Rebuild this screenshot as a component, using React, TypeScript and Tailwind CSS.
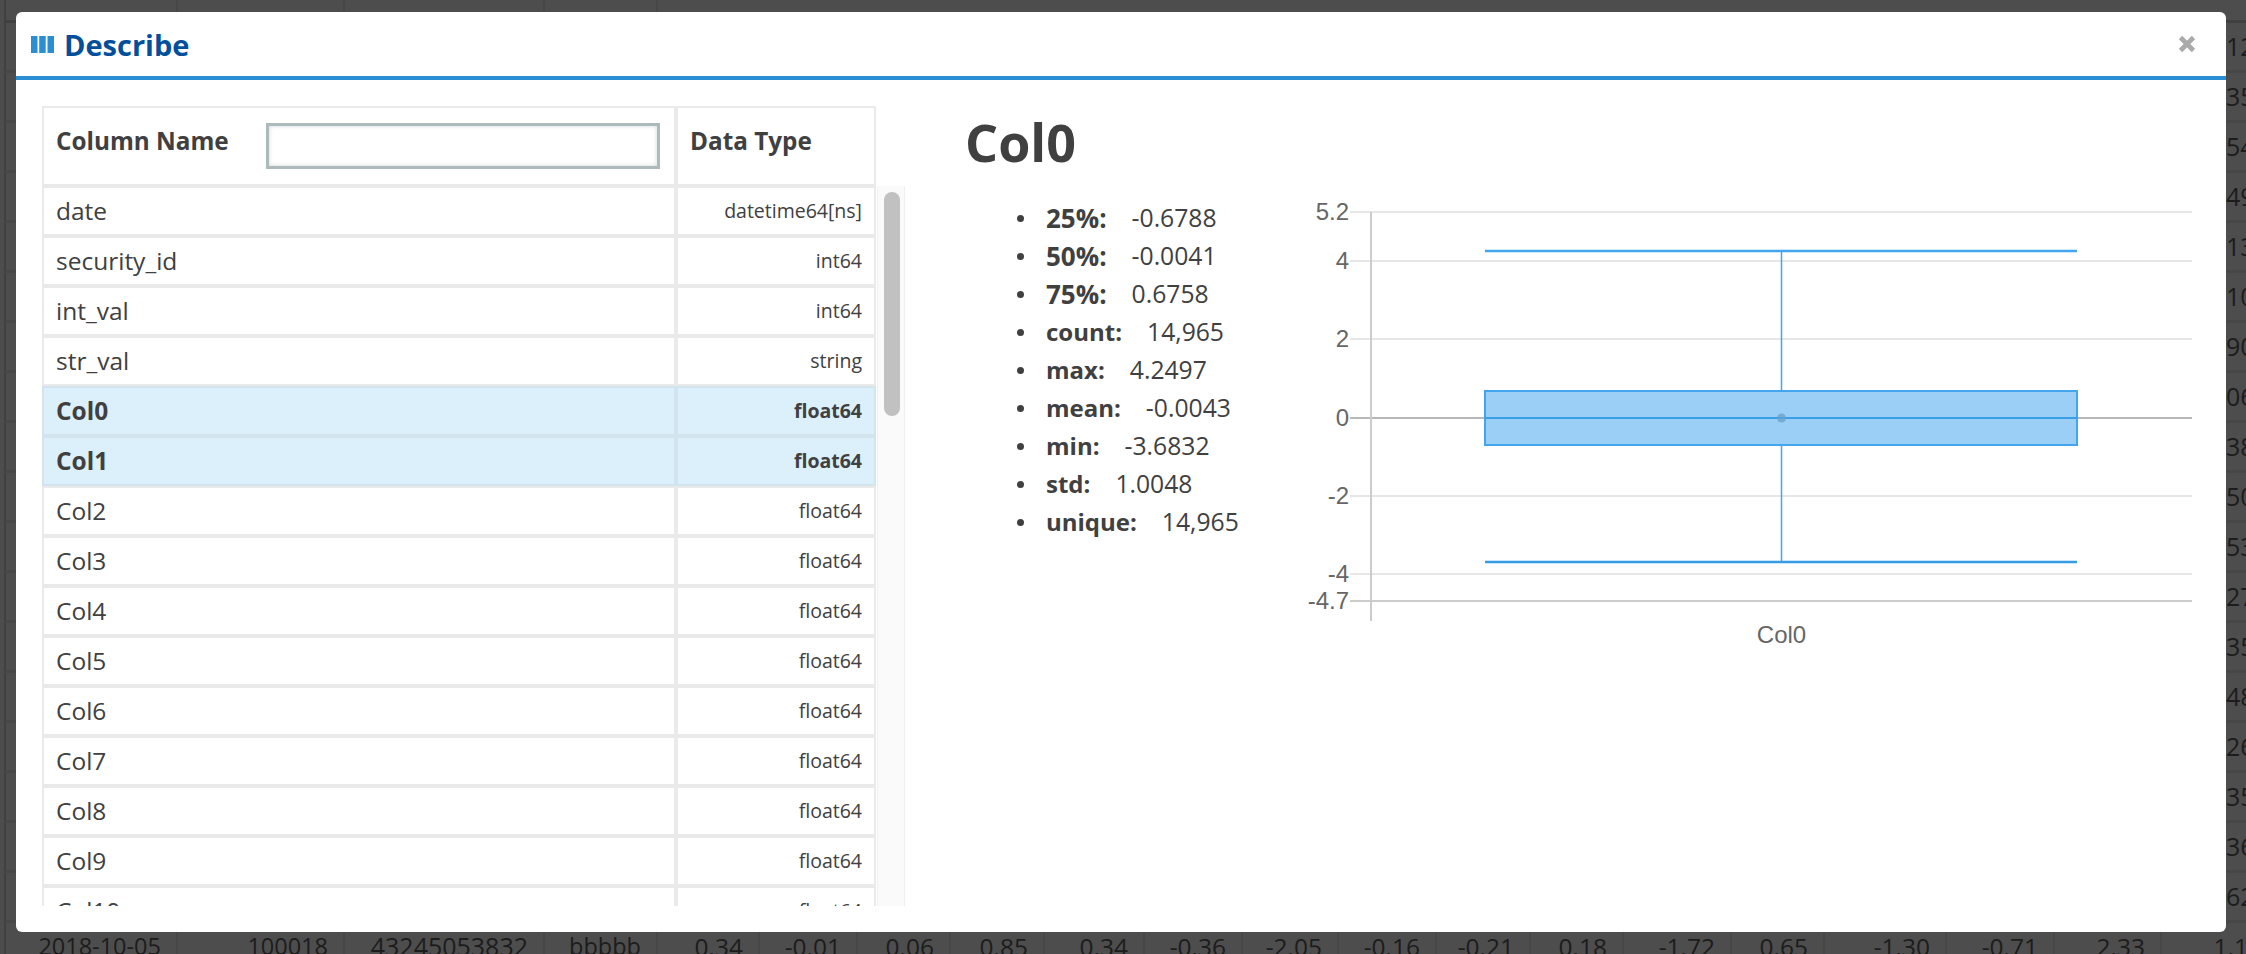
import React from "react";

const colWidths = [172, 167, 200, 113, 102, 98, 93, 94, 100, 98, 96, 98, 94, 93, 108, 93, 122, 108, 107, 117];
const bottomRow = ["2018-10-05", "100018", "43245053832", "bbbbb", "0.34", "-0.01", "0.06", "0.85", "0.34", "-0.36", "-2.05", "-0.16", "-0.21", "0.18", "-1.72", "0.65", "-1.30", "-0.71", "2.33", "1.14"];
const headerCells: [string, number][] = [["", 172], ["security_id", 167], ["int_val", 200], ["str_val", 113]];
const strip = ["12", "35", "54", "49", "13", "10", "90", "06", "38", "50", "53", "27", "35", "48", "26", "35", "36", "62"];

const columns: [string, string, boolean?][] = [
  ["date", "datetime64[ns]"],
  ["security_id", "int64"],
  ["int_val", "int64"],
  ["str_val", "string"],
  ["Col0", "float64", true],
  ["Col1", "float64", true],
  ["Col2", "float64"],
  ["Col3", "float64"],
  ["Col4", "float64"],
  ["Col5", "float64"],
  ["Col6", "float64"],
  ["Col7", "float64"],
  ["Col8", "float64"],
  ["Col9", "float64"],
  ["Col10", "float64"],
];

const stats: [string, string][] = [
  ["25%:", "-0.6788"],
  ["50%:", "-0.0041"],
  ["75%:", "0.6758"],
  ["count:", "14,965"],
  ["max:", "4.2497"],
  ["mean:", "-0.0043"],
  ["min:", "-3.6832"],
  ["std:", "1.0048"],
  ["unique:", "14,965"],
];

const ticks: [string, number, string][] = [
  ["5.2", 212, "#e6e6e6"],
  ["4", 261, "#e6e6e6"],
  ["2", 339, "#e6e6e6"],
  ["-2", 496, "#e6e6e6"],
  ["-4", 574, "#e6e6e6"],
  ["0", 418, "#b8b8b8"],
  ["-4.7", 601, "#cccccc"],
];

function Backdrop() {
  return (
    <div className="text-[23.5px] text-[#1c1c1c]">
      <div className="flex h-[73px] -mt-[50px] ml-[4px] border-l-2 border-b-[3px] border-[#404040]">
        {headerCells.map(([t, w], i) => (
          <div key={i} style={{ width: w }} className="flex items-center justify-center font-bold whitespace-nowrap border-r-2 border-[#474747]">
            {t}
          </div>
        ))}
      </div>
      {strip.map((t, i) => (
        <div key={i} className="flex items-center h-[50px] ml-[4px] border-l-2 border-[#404040] border-b-[3px] border-b-[#474747] pl-[2220px] whitespace-nowrap text-[25px]">
          {t}
        </div>
      ))}
      <div className="flex h-[50px] ml-[4px] border-l-2 border-[#404040] whitespace-nowrap">
        {bottomRow.map((t, i) => (
          <div
            key={i}
            style={{ width: colWidths[i] }}
            className={(i === 2 ? "text-[25px] " : i < 4 ? "text-[23.5px] " : "text-[24.5px] ") + "shrink-0 flex items-center justify-end pr-[15px] pb-[2px] border-r-2 border-[#474747]"}
          >
            {t}
          </div>
        ))}
      </div>
    </div>
  );
}

function Chart() {
  const blue = "#42a5ed";
  return (
    <svg width={900} height={450} viewBox="1300 200 900 450" className="shrink-0 block font-['Liberation_Sans',sans-serif]">
      {ticks.map(([t, y, c]) => (
        <g key={t}>
          <line x1={1350} x2={2192} y1={y} y2={y} stroke={c} strokeWidth={2} />
          <text x={1349} y={y + 8} textAnchor="end" fontSize={24} fill="#666666">{t}</text>
        </g>
      ))}
      <line x1={1371} x2={1371} y1={212} y2={621} stroke="#cccccc" strokeWidth={2} />
      <line x1={1781.5} x2={1781.5} y1={251} y2={562} stroke={blue} strokeWidth={1.5} />
      <line x1={1485} x2={2077} y1={251} y2={251} stroke={blue} strokeWidth={2.5} />
      <line x1={1485} x2={2077} y1={562} y2={562} stroke="#379ce8" strokeWidth={2.5} />
      <rect x={1485} y={391} width={592} height={54} fill="#9bcff5" stroke={blue} strokeWidth={2} />
      <line x1={1485} x2={2077} y1={418} y2={418} stroke="#3b9fe8" strokeWidth={2} />
      <ellipse cx={1781.5} cy={418} rx={4.5} ry={4.5} fill="#6a9fc9" fillOpacity={0.75} />
      <text x={1781.5} y={643} textAnchor="middle" fontSize={24} fill="#666666">Col0</text>
    </svg>
  );
}

export default function App() {
  return (
    <div className="relative h-[954px] w-[2246px] overflow-hidden bg-[#4d4d4d] font-['Open_Sans',sans-serif]">
      <Backdrop />
      <div className="absolute left-4 top-3 w-[2210px] h-[920px] bg-white rounded-[6px] text-[#404040]">
        <div className="flex items-center h-[68px] border-b-4 border-[#2a8fd2] pl-[15px] pr-[30px]">
          <svg width={23} height={17} viewBox="0 0 23 17" className="shrink-0 mt-[1px]">
            <rect x={0} y={0} width={6.5} height={17} fill="#2a8fd2" />
            <rect x={8.2} y={0} width={6.5} height={17} fill="#2a8fd2" />
            <rect x={16.5} y={0} width={6.5} height={17} fill="#2a8fd2" />
          </svg>
          <div className="ml-[10px] text-[29px] font-bold text-[#044f9b] leading-none">Describe</div>
          <svg width={18} height={18} viewBox="0 0 18 18" className="ml-auto shrink-0">
            <path d="M2.5 2.5 L15.5 15.5 M15.5 2.5 L2.5 15.5" stroke="#aaaaaa" strokeWidth={4.6} fill="none" />
          </svg>
        </div>
        <div className="flex pt-[26px] pl-[26px]">
          <div className="w-[863px] shrink-0">
            <div className="flex h-[80px] w-[834px]">
              <div className="flex items-center w-[634px] border-2 border-[#eaeaea] pl-[12px] font-bold text-[24.3px]">
                <span className="mb-[10px] whitespace-nowrap">Column Name</span>
                <input className="ml-[37px] w-[394px] h-[46px] border-[3px] border-[#adbabc] bg-white shadow-[inset_0_0_4px_rgba(120,140,145,0.35)]" />
              </div>
              <div className="flex items-center w-[200px] border-2 border-[#eaeaea] pl-[12px] font-bold text-[24.3px]">
                <span className="mb-[10px] whitespace-nowrap">Data Type</span>
              </div>
            </div>
            <div className="flex h-[720px] overflow-hidden">
              <div className="w-[834px] shrink-0">
                {columns.map(([name, type, sel]) => (
                  <div key={name} className={sel ? "flex h-[50px] bg-[#dcf0fb] font-bold" : "flex h-[50px]"}>
                    <div className={(sel ? "border-[#d2e4ee] " : "border-[#eaeaea] ") + "flex items-center w-[634px] border-2 pl-[12px] text-[24.5px]"}>{name}</div>
                    <div className={(sel ? "border-[#d2e4ee] " : "border-[#eaeaea] ") + "flex items-center justify-end w-[200px] border-2 pr-[12px] text-[19.5px]"}>{type}</div>
                  </div>
                ))}
              </div>
              <div className="ml-[1px] w-[28px] shrink-0 bg-[#fafafa] border-x border-[#f0f0f0] pl-[6px] pt-[6px]">
                <div className="w-[16px] h-[224px] rounded-[8px] bg-[#c1c1c1]" />
              </div>
            </div>
          </div>
          <div className="flex-1 min-w-0">
            <div className="h-[94px] pl-[60px] text-[52px] font-bold leading-[72px]">Col0</div>
            <div className="flex">
              <ul className="w-[395px] shrink-0 list-none pl-[112px] -mt-px">
                {stats.map(([k, v]) => (
                  <li key={k} className="flex items-center h-[38px] leading-[38px] whitespace-nowrap">
                    <span className="w-[7px] h-[7px] rounded-full bg-[#404040] mr-[22px] shrink-0" />
                    <b className={k.includes("%") ? "text-[26px]" : "text-[24px]"}>{k}</b>
                    <span className="ml-[25px] text-[24.7px]">{v}</span>
                  </li>
                ))}
              </ul>
              <Chart />
            </div>
          </div>
        </div>
      </div>
    </div>
  );
}
